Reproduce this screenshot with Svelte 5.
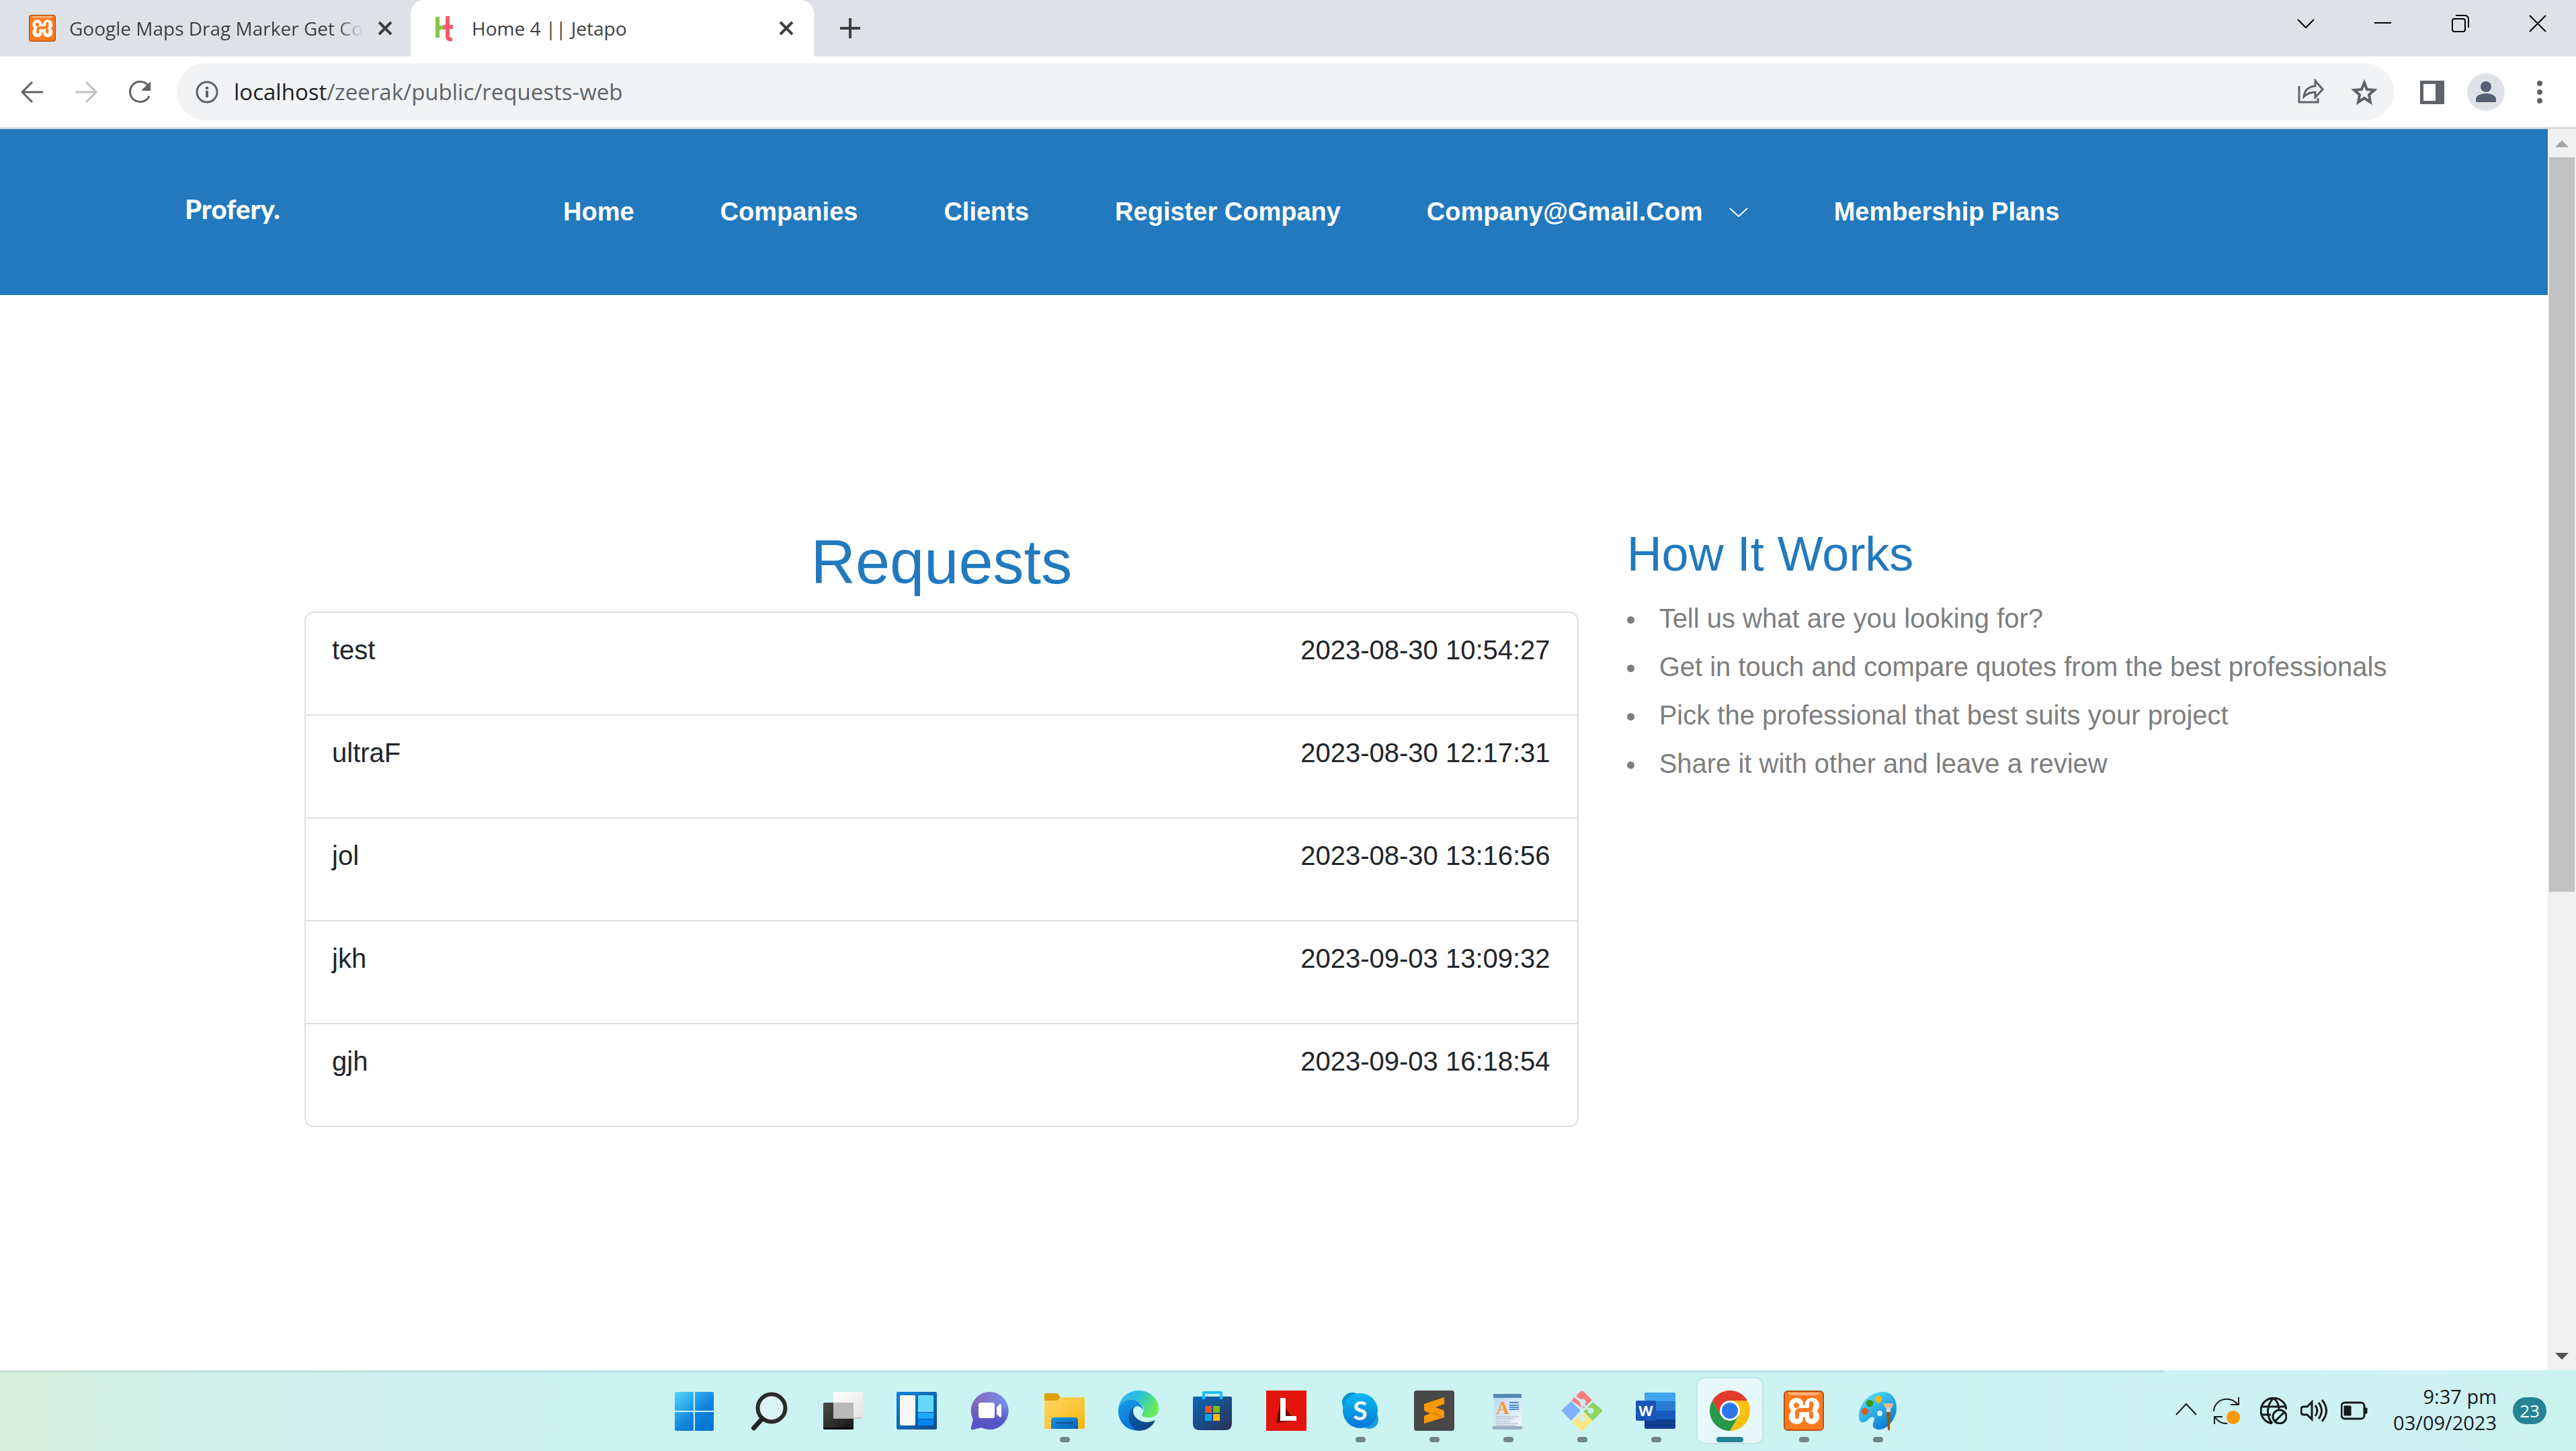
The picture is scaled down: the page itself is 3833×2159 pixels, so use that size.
<script>
  const links = ['Home', 'Companies', 'Clients', 'Register Company', 'Company@Gmail.Com', 'Membership Plans'];
  const requests = [
    { name: 'test', time: '2023-08-30 10:54:27' },
    { name: 'ultraF', time: '2023-08-30 12:17:31' },
    { name: 'jol', time: '2023-08-30 13:16:56' },
    { name: 'jkh', time: '2023-09-03 13:09:32' },
    { name: 'gjh', time: '2023-09-03 16:18:54' }
  ];
  const steps = [
    'Tell us what are you looking for?',
    'Get in touch and compare quotes from the best professionals',
    'Pick the professional that best suits your project',
    'Share it with other and leave a review'
  ];
  const apps = [
    { name: 'Start', icon: start },
    { name: 'Search', icon: search },
    { name: 'Task View', icon: taskView },
    { name: 'Widgets', icon: widgets },
    { name: 'Chat', icon: chat },
    { name: 'File Explorer', icon: explorer, open: true },
    { name: 'Edge', icon: edge },
    { name: 'Store', icon: store },
    { name: 'L', icon: letterL },
    { name: 'Skype', icon: skype, open: true },
    { name: 'Sublime Text', icon: sublime, open: true },
    { name: 'WordPad', icon: wordpad, open: true },
    { name: 'Git', icon: git, open: true },
    { name: 'Word', icon: word, open: true },
    { name: 'Chrome', icon: chrome, open: true, active: true },
    { name: 'XAMPP', icon: xampp, open: true },
    { name: 'Paint', icon: paint, open: true }
  ];
</script>

{#snippet start()}
  <svg viewBox="0 0 60 60" aria-hidden="true">
    <defs><linearGradient id="win" gradientUnits="userSpaceOnUse" x1="2" y1="2" x2="50" y2="58"><stop offset="0" stop-color="#4fd6ff" /><stop offset=".6" stop-color="#1084dd" /><stop offset="1" stop-color="#0275d2" /></linearGradient></defs>
    <path fill="url(#win)" d="M3 2h25v28H0V5q0-3 3-3zM30 2h26q2 0 2 2v26H30zM0 32h28v28H3q-3 0-3-3zM30 32h28v26q0 2-2 2H30z" />
  </svg>
{/snippet}
{#snippet search()}
  <svg viewBox="0 0 60 60" aria-hidden="true">
    <circle cx="34" cy="26" r="20.5" fill="#dcf4f5" stroke="#2c2b2a" stroke-width="6" />
    <path d="M20 42 7.500 56" stroke="#222" stroke-width="7" stroke-linecap="round" />
  </svg>
{/snippet}
{#snippet taskView()}
  <svg viewBox="0 0 60 60" aria-hidden="true">
    <defs>
      <linearGradient id="tvd" x2="1" y2="1"><stop stop-color="#4a4a48" /><stop offset="1" stop-color="#161616" /></linearGradient>
      <linearGradient id="tvl" x2="1" y2="1"><stop stop-color="#fff" /><stop offset="1" stop-color="#e3e3e3" /></linearGradient>
    </defs>
    <rect x="1" y="18" width="45" height="40" rx="2" fill="url(#tvd)" />
    <path d="M1 55h45v1q0 2-2 2H3q-2 0-2-2z" fill="#080808" />
    <rect x="16" y="2" width="44" height="40" rx="2" fill="url(#tvl)" />
    <path d="M16 18h28q2 0 2 2v22H18q-2 0-2-2z" fill="#b9b9b9" />
    <path d="M16 40h44v1q-1 1-2 1H18z" fill="#a8aaaa" opacity=".5" />
  </svg>
{/snippet}
{#snippet widgets()}
  <svg viewBox="0 0 60 60" aria-hidden="true">
    <defs><linearGradient id="wid" x2="1" y2="1"><stop stop-color="#0a84e0" /><stop offset="1" stop-color="#114a8a" /></linearGradient></defs>
    <rect y="2" width="60" height="56" rx="2" fill="url(#wid)" />
    <rect x="5" y="7" width="23" height="45" rx="2" fill="#f8f8f8" />
    <path d="M34 7h19q2 0 2 2v23H32V9q0-2 2-2z" fill="#66d9ff" />
    <path d="M32 33h23v9H32z" fill="#1ba8ff" />
    <path d="M32 43h23v9H34q-2 0-2-2z" fill="#0487f0" />
  </svg>
{/snippet}
{#snippet chat()}
  <svg viewBox="0 0 60 60" aria-hidden="true">
    <defs><linearGradient id="cht" x1="0" y1=".3" x2="1" y2=".2"><stop stop-color="#8465b4" /><stop offset="1" stop-color="#7593ef" /></linearGradient><linearGradient id="chb" x2="0" y2="1"><stop offset=".3" stop-color="#5855c8" stop-opacity="0" /><stop offset=".8" stop-color="#5654c6" /></linearGradient></defs>
    <path d="M29 2a28 28 0 1 1-13 53L4 58q-4 1-3-3l3-12A28 28 0 0 1 29 2z" fill="url(#cht)" />
    <path d="M29 2a28 28 0 1 1-13 53L4 58q-4 1-3-3l3-12A28 28 0 0 1 29 2z" fill="url(#chb)" />
    <rect x="12" y="18" width="24" height="23" rx="3" fill="#fff" />
    <path d="m39 25 5-5q2 0 2 2v16q0 2-2 2l-5-5z" fill="#fff" />
  </svg>
{/snippet}
{#snippet explorer()}
  <svg viewBox="0 0 60 60" aria-hidden="true">
    <defs>
      <linearGradient id="fol" x2="1" y2="1"><stop stop-color="#ffd869" /><stop offset="1" stop-color="#f8b60c" /></linearGradient>
      <linearGradient id="pok" x2="1" y2="1"><stop stop-color="#1594e0" /><stop offset="1" stop-color="#0560b4" /></linearGradient>
    </defs>
    <path d="M2 4h16q2 0 3 2l3 5v8H0V6q0-2 2-2z" fill="#dfa000" />
    <path d="M0 15h18q2 0 4-3l2-2h34q2 0 2 2v43q0 2-2 2H2q-2 0-2-2z" fill="url(#fol)" />
    <path d="M10 57V45q0-5 5-5h29q6 0 6 5v12z" fill="url(#pok)" />
    <path d="M18 48h25" stroke="#0b4d8d" stroke-width="2" />
  </svg>
{/snippet}
{#snippet edge()}
  <svg viewBox="0 0 60 60" aria-hidden="true">
    <defs>
      <linearGradient id="eg" x2="1" y2=".4"><stop stop-color="#36b8fb" /><stop offset=".5" stop-color="#2bbfdc" /><stop offset="1" stop-color="#66ea5b" /></linearGradient>
      <linearGradient id="eb" x2=".4" y2="1"><stop stop-color="#1b98e6" /><stop offset="1" stop-color="#0277d8" /></linearGradient>
      <linearGradient id="ed" x2="1" y2="1"><stop stop-color="#0b5cab" /><stop offset="1" stop-color="#123f7e" /></linearGradient>
    </defs>
    <path d="M0 28C1 12 14 0 30 0c18 0 30 13 30 27 0 10-8 14-16 13-8 0-10-3-8-6 5-8-1-15-8-17z" fill="url(#eg)" />
    <path d="M0 29c2-11 11-16 20-15 10 1 17 8 17 16-2-6-9-9-13-5-9 9-4 29 11 34-19 4-36-10-35-30z" fill="url(#eb)" />
    <path d="M24 24c-3 4-3 11 2 16 7 8 19 9 29 4-4 11-17 18-28 15C15 53 12 35 20 27q2-2 4-3z" fill="url(#ed)" />
  </svg>
{/snippet}
{#snippet store()}
  <svg viewBox="0 0 60 60" aria-hidden="true">
    <defs><linearGradient id="sto" x2="1" y2="1"><stop stop-color="#0767b8" /><stop offset="1" stop-color="#2a3157" /></linearGradient></defs>
    <path d="M3 9h54q2 0 2 2v38q0 10-10 10H11Q1 59 1 49V11q0-2 2-2z" fill="url(#sto)" />
    <path d="M17 13V3h26v10" fill="none" stroke="#20bdf3" stroke-width="4" stroke-linejoin="round" />
    <path d="M19 23h10v10H19z" fill="#f35325" /><path d="M31 23h10v10H31z" fill="#81bc06" />
    <path d="M19 35h10v10H19z" fill="#05a6f0" /><path d="M31 35h10v10H31z" fill="#ffba08" />
  </svg>
{/snippet}
{#snippet letterL()}
  <svg viewBox="0 0 60 60" aria-hidden="true">
    <path fill="#e3140b" d="M0 0h60v60H0z" />
    <path fill="#6a0904" d="m21 16-6 32 28-3z" />
    <path fill="#fff" d="M21 11h8v27h16v7H21z" />
  </svg>
{/snippet}
{#snippet skype()}
  <svg viewBox="0 0 60 60" aria-hidden="true">
    <defs><linearGradient id="sky" x2="0" y2="1"><stop stop-color="#06b8f2" /><stop offset="1" stop-color="#0378d7" /></linearGradient></defs>
    <circle cx="18" cy="18" r="15" fill="#0794d3" /><circle cx="43" cy="43" r="14" fill="#1b9fe4" />
    <circle cx="30" cy="30" r="26" fill="url(#sky)" />
    <text x="30" y="44" text-anchor="middle" font-family="Lato, sans-serif" font-weight="700" font-size="39" fill="#fff">S</text>
  </svg>
{/snippet}
{#snippet sublime()}
  <svg viewBox="0 0 60 60" aria-hidden="true">
    <rect width="60" height="60" rx="4" fill="#484848" />
    <path d="M45 10v10l-13 5 11 4q2 1 2 3v8L15 49V38l9-4-7-3q-2-1-2-3v-8z" fill="#ff9800" />
    <path d="m24 34 8-3 13 9-2 1z" fill="#e58900" />
  </svg>
{/snippet}
{#snippet wordpad()}
  <svg viewBox="0 0 60 60" aria-hidden="true">
    <defs><linearGradient id="wp" x2="1" y2="1"><stop stop-color="#b5d9f3" /><stop offset="1" stop-color="#f3f6fa" /></linearGradient></defs>
    <path d="M9 8h40l1 47H8z" fill="url(#wp)" /><path d="M8 5h42v6H8z" fill="#5588b5" />
    <path d="M7 53h44v5H7z" fill="#9aafc3" />
    <text x="22" y="35" text-anchor="middle" font-family="Liberation Serif, serif" font-weight="700" font-size="27" fill="#fb9636">A</text>
    <path d="M32 18h14M32 22h14M32 25h14M32 28h14" stroke="#4a8fd0" stroke-width="2" />
    <path d="M12 39h34M12 42h28M12 46h22M12 49h33M12 52h29" stroke="#a9b4c0" stroke-width="1" />
  </svg>
{/snippet}
{#snippet git()}
  <svg viewBox="0 0 60 60" aria-hidden="true">
    <path d="m14 15 13-13q3-3 6 0l13 13-14 14-6-6z" fill="#ff7f7f" />
    <path d="m46 17 13 11q2 2 0 4L46 45 32 31z" fill="#8fd45c" />
    <path d="m14 16 14 14-14 15L1 32q-2-2 0-4z" fill="#80b0ff" />
    <path d="m30 31 15 14-13 14q-2 2-4 0L15 46z" fill="#ffe480" />
    <g stroke="#cbf1f2" stroke-width="3" fill="none"><path d="m17 7 14 11M30 18v24M31 20l12 11M46 15 31 30M15 46l15-16" /></g>
    <g fill="#cbf1f2"><circle cx="31" cy="17" r="4.500" /><circle cx="43" cy="30" r="4.500" /><circle cx="30" cy="42" r="4.500" /></g>
  </svg>
{/snippet}
{#snippet word()}
  <svg viewBox="0 0 60 60" aria-hidden="true">
    <path d="M15 3h42q2 0 2 2v11H13V5q0-2 2-2z" fill="#41a5ee" /><path d="M13 16h46v14H13z" fill="#2b7cd3" />
    <path d="M13 30h46v14H13z" fill="#185abd" /><path d="M13 43h46v12q0 2-2 2H15q-2 0-2-2z" fill="#103f91" />
    <rect y="15" width="30" height="30" rx="2" fill="#1a54b6" />
    <text x="15" y="38" text-anchor="middle" font-family="Open Sans, sans-serif" font-weight="700" font-size="22" fill="#fff">W</text>
  </svg>
{/snippet}
{#snippet chrome()}
  <svg viewBox="0 0 60 60" aria-hidden="true">
    <path d="M30 30 4 15a30 30 0 0 1 52 0z" fill="#e33b2e" />
    <path d="M30 15h26a30 30 0 0 1-26 45l13-22z" fill="#fdc112" />
    <path d="M17 38 4 15a30 30 0 0 0 26 45l13-22z" fill="#279847" />
    <path d="M4 15 17 38l6-20 7-3z" fill="#e33b2e" />
    <circle cx="30" cy="30" r="15" fill="#fff" /><circle cx="30" cy="30" r="12" fill="#2b78ee" />
  </svg>
{/snippet}
{#snippet xampp()}
  <svg viewBox="0 0 60 60" aria-hidden="true">
    <rect x="1" y="1" width="58" height="58" rx="5" fill="#fa7a20" stroke="#b85010" stroke-width="2" />
    <path d="M7 3h46q0 4-4 4H11q-4 0-4-4z" fill="#ffb27c" />
    <g fill="#fff"><circle cx="19" cy="22" r="11" /><circle cx="42" cy="22" r="11" /><circle cx="19" cy="39" r="11" /><circle cx="42" cy="39" r="11" /><path d="M14 22h33v17H14z" /></g>
    <path d="M30.500 8v13M30.500 40v12" stroke="#fa7a20" stroke-width="3" />
    <path d="M41 19v5q0 5-5 5H25q-5 0-5 5v5M41 39v-5" fill="none" stroke="#fa7a20" stroke-width="6" stroke-linecap="round" />
    <circle cx="19" cy="22" r="4" fill="#fa7a20" />
  </svg>
{/snippet}
{#snippet paint()}
  <svg viewBox="0 0 60 60" aria-hidden="true">
    <defs><linearGradient id="pal" x2=".7" y2="1"><stop stop-color="#5df0ff" /><stop offset="1" stop-color="#0676d4" /></linearGradient></defs>
    <path d="M38 2c12 0 20 10 20 23 0 16-12 33-26 33-9 0-11-6-8-12 3-7-2-9-7-4C11 49 2 51 2 38 2 20 18 2 38 2z" fill="url(#pal)" />
    <circle cx="11" cy="31" r="5.300" fill="#e05722" /><circle cx="18" cy="19" r="5.300" fill="#3a9a12" /><circle cx="31" cy="13" r="5.300" fill="#fdb805" />
    <circle cx="33" cy="34" r="4" fill="#ccf5fa" />
    <path d="M43 31h6l-1 27q-2 3-3 0z" fill="#9b5707" /><path d="M43 27h6v5h-6z" fill="#d9dde0" /><path d="M39 19h14q0 5-4 8h-6q-4-3-4-8z" fill="#e7bd8b" />
  </svg>
{/snippet}
{#snippet cross()}
  <svg class="i22" viewBox="0 0 22 22" aria-hidden="true"><path d="m2 2 18 18M20 2 2 20" fill="none" stroke="#3c4043" stroke-width="4" /></svg>
{/snippet}

<div class="desktop">
  <div class="tabs">
    <div class="tab">
      <span class="favicon">{@render xampp()}</span>
      <span class="title fade">Google Maps Drag Marker Get Co</span>
      <button aria-label="Close Google Maps tab">{@render cross()}</button>
    </div>
    <div class="tab current">
      <span class="favicon">
        <svg viewBox="0 0 40 40" aria-hidden="true"><g fill="none" stroke-width="6"><path d="M7 3v31M7 19h12" stroke="#8bc34a" /><path d="M22 2v30q0 5 7 5M16 18h14" stroke="#f75b6b" /></g></svg>
      </span>
      <span class="title">Home 4 || Jetapo</span>
      <button aria-label="Close Jetapo tab">{@render cross()}</button>
    </div>
    <button class="plus" aria-label="New tab"><svg class="i30" viewBox="0 0 30 30" aria-hidden="true"><path d="M15 0v30M0 15h30" stroke="#3c4043" stroke-width="4" /></svg></button>
    <div class="window">
      <button aria-label="Search tabs"><svg viewBox="0 0 26 26" aria-hidden="true"><path d="m1 7 12 12L25 7" /></svg></button>
      <button aria-label="Minimize"><svg viewBox="0 0 26 26" aria-hidden="true"><path d="M0 12h25" /></svg></button>
      <button aria-label="Restore"><svg viewBox="0 0 26 26" aria-hidden="true"><rect x="1" y="6" width="19" height="19" rx="3" /><path d="M6 1h13q6 0 6 6v12" /></svg></button>
      <button aria-label="Close"><svg viewBox="0 0 26 26" aria-hidden="true"><path d="m1 1 24 24M25 1 1 25" /></svg></button>
    </div>
  </div>

  <div class="toolbar">
    <button aria-label="Back"><svg viewBox="0 0 40 40" aria-hidden="true"><path d="M36 20H6M20 5 5 20l15 15" /></svg></button>
    <button class="off" aria-label="Forward"><svg viewBox="0 0 40 40" aria-hidden="true"><path d="M4 20h30M20 5l15 15-15 15" /></svg></button>
    <button aria-label="Reload"><svg viewBox="0 0 40 40" aria-hidden="true"><path d="M32 10a15 15 0 1 0 2 16" /><path d="M36 4v14H22z" class="solid" /></svg></button>
    <div class="address">
      <svg class="i34" viewBox="0 0 34 34" aria-hidden="true"><circle cx="17" cy="17" r="15" fill="none" stroke="#5f6368" stroke-width="3" /><path d="M17 9v4M17 15v10" stroke="#5f6368" stroke-width="4" /></svg>
      <a class="url" href="#top"><b>localhost</b>/zeerak/public/requests-web</a>
      <button aria-label="Share"><svg viewBox="0 0 40 40" aria-hidden="true"><path d="M3 11v24h28v-6" /><path d="M27 3v8C16 12 11 18 10 27c5-5 10-7 17-7v8l11-12z" /></svg></button>
      <button aria-label="Bookmark"><svg viewBox="0 0 40 40" aria-hidden="true"><path d="m20 6 4 10 11 1-8 7 2 11-9-6-9 6 2-11-8-7 11-1z" stroke-width="4" /></svg></button>
    </div>
    <button aria-label="Side panel"><svg viewBox="0 0 40 40" aria-hidden="true"><path d="M2 3h36v35H2z" class="solid" /><path d="M7 8h18v25H7z" fill="#fff" stroke="none" /></svg></button>
    <button class="avatar" aria-label="Profile"><svg viewBox="0 0 56 56" aria-hidden="true"><circle cx="28" cy="28" r="28" /><g><circle cx="28" cy="20" r="8" /><path d="M13 43v-4c0-7 9-9 15-9s15 2 15 9v4z" /></g></svg></button>
    <button aria-label="Menu"><svg viewBox="0 0 40 40" aria-hidden="true"><g class="solid"><circle cx="20" cy="7" r="4" /><circle cx="20" cy="20" r="4" /><circle cx="20" cy="33" r="4" /></g></svg></button>
  </div>

  <div class="viewport">
    <div class="page" id="top">
      <header>
        <a class="brand" href="#top">Profery.</a>
        <nav>
          {#each links as link}
            <a href="#top">{link}{#if link.includes('@')}<svg viewBox="0 0 28 16" aria-hidden="true"><path d="m1 2 13 12L27 2" fill="none" stroke="#fff" stroke-width="2" /></svg>{/if}</a>
          {/each}
        </nav>
      </header>
      <main>
        <section>
          <h1>Requests</h1>
          <ul class="card">
            {#each requests as r}
              <li><span>{r.name}</span><time>{r.time}</time></li>
            {/each}
          </ul>
        </section>
        <aside>
          <h2>How It Works</h2>
          <ul class="steps">
            {#each steps as s}<li>{s}</li>{/each}
          </ul>
        </aside>
      </main>
    </div>
    <div class="scroll" aria-hidden="true">
      <svg viewBox="0 0 42 42"><path d="m11 27 10-10 10 10z" fill="#a3a3a3" /></svg>
      <div class="track"><div class="thumb"></div></div>
      <svg viewBox="0 0 42 42"><path d="m11 16 10 10 10-10z" fill="#505050" /></svg>
    </div>
  </div>

  <footer>
    <div class="apps">
      {#each apps as app}
        <button class:active={app.active} aria-label={app.name}>
          {@render app.icon()}
          {#if app.open}<span class="dot"></span>{/if}
        </button>
      {/each}
    </div>
    <div class="tray">
      <button class="caret" aria-label="Show hidden icons"><svg viewBox="0 0 32 40" aria-hidden="true"><path d="m1 26 15-16 15 16" /></svg></button>
      <button class="sync" aria-label="Sync"><svg viewBox="0 0 40 40" aria-hidden="true"><path d="M1 21C1 4 24-5 37 11M38 0v11H26M2 40V29h12M3 30q7 10 18 9" /><circle cx="30" cy="30" r="10" fill="#ff9800" stroke="none" /></svg></button>
      <button class="system" aria-label="Network, volume and battery">
        <svg viewBox="0 0 40 40" aria-hidden="true"><path d="M18 39A19 19 0 1 1 39 18M2 14h36M2 26h14M18 39C9 28 9 12 20 1q8 7 8 17" /><circle cx="29" cy="29" r="10" /><path d="m22 36 14-14" /></svg>
        <svg viewBox="0 0 40 40" aria-hidden="true"><path d="M17 7 10 14H5q-4 0-4 4v4q0 4 4 4h5l7 7zM22 12q6 8 0 16M27 8q9 12 0 24M32 4q13 16 0 32" /></svg>
        <svg viewBox="0 0 40 40" aria-hidden="true"><rect x="1" y="8" width="34" height="24" rx="5" /><path d="M5 13h10v14H5zM36 16h3v8h-3z" fill="#161b1b" stroke-width="1" /></svg>
      </button>
      <button class="clock"><time>9:37 pm</time><time>03/09/2023</time></button>
      <button class="count">23</button>
    </div>
  </footer>
</div>

<style>
  :global(body) { margin: 0; background: #fff; }
  * { box-sizing: border-box; }
  .desktop { display: flex; flex-direction: column; min-height: 100vh; font-family: "Open Sans", "Noto Sans", sans-serif; }
  button { display: flex; align-items: center; justify-content: center; flex: none; padding: 0; border: 0; background: none; font: inherit; color: inherit; }
  a { color: inherit; text-decoration: none; }
  svg { display: block; flex: none; }
  ul { list-style: none; margin: 0; padding: 0; }

  .tabs { display: flex; height: 84px; background: #dee1e6; color: #3c4043; font-size: 28px; }
  .tab { display: flex; align-items: center; width: 611px; padding: 0 27px 0 43px; }
  .tab.current { width: 600px; padding: 0 30px 0 33px; background: #fff; border-radius: 20px 20px 0 0; }
  .favicon { width: 40px; height: 40px; flex: none; }
  .title { margin: 0 auto 0 20px; white-space: nowrap; }
  .current .title { margin-left: 18px; }
  .fade { -webkit-mask-image: linear-gradient(90deg, #000 91%, transparent); mask-image: linear-gradient(90deg, #000 91%, transparent); }
  .i22 { width: 22px; }
  .i30 { width: 30px; }
  .i34 { width: 34px; }
  .plus { width: 108px; }
  .window { display: flex; align-items: center; gap: 89px; margin-left: auto; padding: 0 44px 14px 0; }
  .window svg { width: 26px; fill: none; stroke: #000; stroke-width: 2; }

  .toolbar { display: flex; align-items: center; gap: 40px; height: 108px; padding: 0 34px 0 28px; border-bottom: 3px solid #d9dadd; background: #fff; }
  .toolbar svg { width: 40px; fill: none; stroke: #5f6368; stroke-width: 3; }
  .toolbar .solid { fill: #5f6368; stroke: none; }
  .toolbar .off { opacity: .4; }
  .toolbar .address { display: flex; flex: 1; align-items: center; gap: 40px; height: 85px; margin: 0 -3px 0 -5px; padding: 0 24px 0 28px; border-radius: 43px; background: #f1f3f4; }
  .toolbar .address .i34 { width: 34px; }
  .url { flex: 1; margin-left: -17px; font-size: 33px; color: #5f6368; }
  .url b { font-weight: 400; color: #202124; }
  .toolbar .avatar { margin: 0 -8px; }
  .toolbar .avatar svg { width: 56px; fill: #dee1e6; stroke: none; }
  .avatar svg g { fill: #576070; }

  .viewport { display: flex; flex: 1; font-family: "Liberation Sans", Arial, sans-serif; }
  .page { flex: 1; min-width: 0; }
  header { display: flex; align-items: center; height: 247px; padding-left: 275px; background: #2279bd; color: #fff; }
  .brand { width: 563px; padding-bottom: 10px; font-family: Lato, sans-serif; font-size: 40px; font-weight: 900; }
  nav { display: flex; gap: 128px; font-size: 38px; font-weight: 700; white-space: nowrap; }
  nav a { display: flex; align-items: center; gap: 39px; }
  nav svg { width: 28px; }
  main { display: grid; grid-template-columns: 5fr 3fr; gap: 72px; padding: 343px 233px 120px 453px; font-size: 40px; }
  h1, h2 { margin: 0; font-weight: 400; color: #2279bd; }
  h1 { height: 128px; line-height: 108px; font-size: 92px; text-align: center; }
  .card { border: 2px solid #dfdfdf; border-radius: 14px; color: #212529; }
  .card li { display: flex; justify-content: space-between; padding: 20px 40px 61px 39px; line-height: 70px; }
  .card li + li { border-top: 2px solid #dfdfdf; }
  h2 { height: 102px; line-height: 84px; font-size: 72px; }
  .steps { line-height: 72px; white-space: nowrap; color: #7e7e7e; }
  .steps li { display: flex; align-items: center; gap: 37px; }
  .steps li::before { content: ""; width: 11px; height: 11px; margin-top: 4px; border-radius: 50%; background: currentColor; }

  .scroll { display: flex; flex-direction: column; width: 42px; background: #f0f0f0; }
  .scroll svg { width: 42px; }
  .track { flex: 1; padding: 0 2px; }
  .thumb { height: 62%; background: #c1c1c1; }

  footer {
    display: grid; grid-template-columns: 1fr auto 1fr; align-items: center; height: 120px; padding-right: 5px; color: #161b1b;
    background:
      linear-gradient(#00404018, #00404018) 0 0 / 84% 3px no-repeat,
      linear-gradient(90deg, #daf0df 0, #d3f1e9 6%, #cff1ee 15%, #cbf3f2 24%, #cbf3f2 60%, #cdf1f4 95%, #caf2ee 100%);
  }
  .apps { grid-column: 2; display: flex; gap: 14px; }
  .apps button { position: relative; width: 96px; height: 96px; border-radius: 10px; }
  .apps svg { width: 60px; }
  .apps .active { background: #e6f8fa; box-shadow: 0 0 0 2px #c0e6e6; }
  .dot { position: absolute; bottom: 1px; left: 50%; width: 15px; height: 8px; margin-left: -7px; border-radius: 4px; background: #6f8685; }
  .active .dot { width: 40px; margin-left: -20px; background: #258394; }
  .tray { display: flex; align-items: center; justify-content: flex-end; padding-right: 39px; font-size: 29px; }
  .tray svg { width: 40px; fill: none; stroke: #161b1b; stroke-width: 2; }
  .tray .caret svg { width: 32px; }
  .tray .caret { margin-right: 24px; }
  .sync { margin-right: 30px; }
  .system { gap: 20px; margin-right: 38px; }
  .tray .system svg { stroke-width: 3; }
  .clock { flex-direction: column; align-items: flex-end; padding-bottom: 4px; line-height: 39px; }
  .count { width: 50px; height: 40px; margin-left: 24px; border-radius: 20px; background: #258394; color: #fff; font-size: 26px; }
</style>
